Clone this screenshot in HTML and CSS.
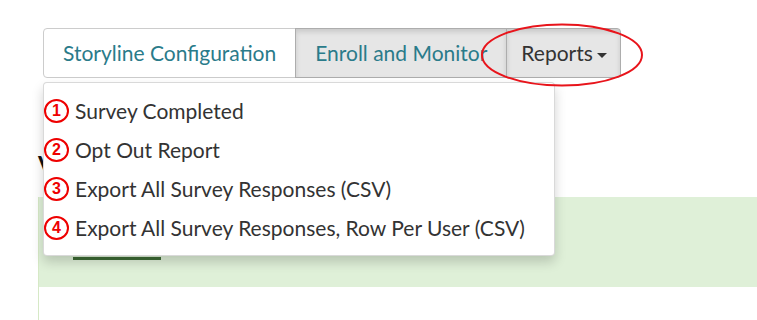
FILE: index.html
```html
<!DOCTYPE html>
<html>
<head>
<meta charset="utf-8">
<link rel="stylesheet" href="styles.css">
</head>
<body>
<div class="page">
  <div class="nav">
    <button class="btn btn-first">Storyline Configuration</button>
    <button class="btn btn-active">Enroll and Monitor</button>
    <button class="btn btn-active btn-last btn-dark">Reports<span class="caret"></span></button>
  </div>
  <h3 class="heading">View</h3>
  <div class="panel">
    <div class="alert">
      <div class="underline"></div>
    </div>
  </div>
  <ul class="dropdown">
    <li class="item"><span class="num">1</span>Survey Completed</li>
    <li class="item"><span class="num">2</span>Opt Out Report</li>
    <li class="item"><span class="num">3</span>Export All Survey Responses (CSV)</li>
    <li class="item"><span class="num">4</span>Export All Survey Responses, Row Per User (CSV)</li>
  </ul>
  <svg class="ring" width="170" height="70" viewBox="0 0 170 70">
    <ellipse cx="85" cy="35" rx="80" ry="30.5" fill="none" stroke="#e8141b" stroke-width="2"/>
  </svg>
</div>
</body>
</html>
```
FILE: styles.css
```css
html, body {
  margin: 0;
  padding: 0;
  background: #fff;
  overflow: hidden;
}
.page {
  position: relative;
  width: 757px;
  height: 320px;
  padding-top: 28px;
  box-sizing: border-box;
  overflow: hidden;
  font-family: Lato, "Open Sans", sans-serif;
}
.nav {
  display: flex;
  margin-left: 43px;
}
.btn {
  font-family: Lato, sans-serif;
  font-size: 21px;
  line-height: 22px;
  padding: 13px 19px;
  height: 50px;
  border: 1px solid #ccc;
  background: #fff;
  color: #2a7b8a;
  margin: 0;
  margin-left: -1px;
  white-space: nowrap;
  cursor: pointer;
}
.btn-first {
  margin-left: 0;
  border-radius: 4px 0 0 4px;
}
.btn-active {
  background: #e6e6e6;
  border-color: #adadad;
  box-shadow: inset 0 3px 5px rgba(0,0,0,.125);
}
.btn-last {
  border-radius: 0 4px 4px 0;
}
.btn-dark {
  color: #333;
  padding: 13px 13px 13px 14px;
}
.caret {
  display: inline-block;
  width: 0;
  height: 0;
  margin-left: 4px;
  vertical-align: middle;
  border-top: 5px solid #333;
  border-left: 5px solid transparent;
  border-right: 5px solid transparent;
}
.heading {
  margin: 72px 0 0 38px;
  font-size: 24px;
  line-height: 30px;
  font-weight: 700;
  color: #111;
}
.panel {
  margin: 17px 0 0 38px;
  border-left: 1px solid #d6e9c6;
  height: 123px;
}
.alert {
  background: #dff0d8;
  height: 90px;
  padding-top: 60px;
  box-sizing: border-box;
}
.underline {
  margin-left: 34px;
  width: 88px;
  height: 3px;
  background: #3d6b35;
}
.dropdown {
  position: absolute;
  left: 43px;
  top: 82px;
  width: 512px;
  margin: 0;
  padding: 8px 0;
  list-style: none;
  background: #fff;
  border: 1px solid rgba(0,0,0,.15);
  border-radius: 4px;
  box-shadow: 0 6px 12px rgba(0,0,0,.175);
  box-sizing: border-box;
}
.item {
  display: flex;
  align-items: center;
  height: 39px;
  font-size: 21px;
  color: #333;
  white-space: nowrap;
}
.num {
  display: inline-flex;
  align-items: center;
  justify-content: center;
  width: 21px;
  height: 20px;
  border: 2px solid #ee0000;
  border-radius: 50%;
  color: #ee0000;
  font-weight: 700;
  font-size: 16px;
  font-family: "Liberation Sans", Arial, sans-serif;
  margin-right: 6px;
  flex: none;
}
.ring {
  position: absolute;
  left: 477px;
  top: 20px;
}
```
